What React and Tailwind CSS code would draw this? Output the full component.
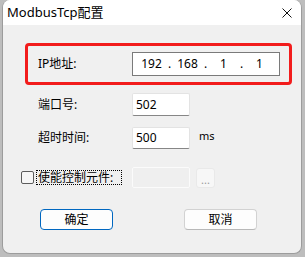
import React from 'react';

const font = { fontFamily: '"Noto Sans", "Noto Sans CJK SC", sans-serif' };

function Field({ className = '', children }) {
  return (
    <div className={`flex items-center bg-white border border-[#e3e3e3] border-b-[#868686] rounded-[2px] pl-[3px] text-[12px] text-black ${className}`}>
      {children}
    </div>
  );
}

export default function App() {
  const octets = ['192', '168', '1', '1'];
  return (
    <div className="w-[305px] h-[257px] bg-[#bdbdbd] overflow-hidden" style={font}>
      <div className="ml-[2px] w-[300px] h-[254px] bg-[#f0f0f0] border-x border-b border-[#9c9c9c] rounded-[8px] overflow-hidden flex flex-col">
        {/* Title bar */}
        <div className="h-[25px] bg-white flex items-center justify-between pl-[4px] pr-[9px]">
          <span className="text-[13px] text-black leading-none">ModbusTcp配置</span>
          <svg width="10" height="10" viewBox="0 0 10 10" className="mt-[1px]">
            <path d="M0.5 0.5 L9.5 9.5 M9.5 0.5 L0.5 9.5" stroke="#111" strokeWidth="1" fill="none" />
          </svg>
        </div>

        {/* IP row inside red frame */}
        <div className="mt-[18px] ml-[22px] w-[267px] h-[42px] border-[3px] border-[#f21c1c] rounded-[4px] flex items-center pl-[10px]">
          <span className="w-[94px] text-[12px] text-black">IP地址:</span>
          <div className="w-[148px] h-[24px] bg-white border border-[#7a7a7a] flex items-center pl-[4px] text-[12px] text-black">
            {octets.map((o, i) => (
              <React.Fragment key={i}>
                <span className="w-[29px] text-center">{o}</span>
                {i < 3 && <span className="w-[7px] text-center">.</span>}
              </React.Fragment>
            ))}
          </div>
        </div>

        {/* Port */}
        <div className="mt-[8px] ml-[35px] flex items-center">
          <span className="w-[94px] text-[12px] text-black">端口号:</span>
          <Field className="w-[58px] h-[23px]">502</Field>
        </div>

        {/* Timeout */}
        <div className="mt-[11px] ml-[35px] flex items-center">
          <span className="w-[94px] text-[12px] text-black">超时时间:</span>
          <Field className="w-[58px] h-[22px]">500</Field>
          <span className="ml-[9px] -mt-[3px] text-[11px] text-black">ms</span>
        </div>

        {/* Enable element */}
        <div className="mt-[18px] ml-[18px] flex items-center">
          <div className="w-[13px] h-[13px] border border-[#5c5c5c] rounded-[2px] bg-[#f6f6f6]" />
          <span className="ml-[2px] w-[86px] h-[15px] border border-dotted border-black flex items-center pl-[1px] text-[12px] text-black leading-[13px]">
            使能控制元件:
          </span>
          <div className="ml-[10px] w-[58px] h-[21px] bg-[#efefef] border border-[#fbfbfb] rounded-[2px]" />
          <div className="ml-[6px] w-[19px] h-[20px] bg-[#f7f7f7] border border-[#e9e9e9] rounded-[3px] flex items-center justify-center text-[11px] text-[#9a9a9a] leading-none pt-[4px]">
            ...
          </div>
        </div>

        {/* Buttons */}
        <div className="mt-[21px] flex items-center">
          <button className="ml-[37px] w-[73px] h-[21px] bg-[#fdfdfd] border border-[#0067c0] rounded-[4px] text-[12px] text-black leading-none flex items-center justify-center">
            确定
          </button>
          <button className="ml-[71px] w-[73px] h-[21px] bg-[#fdfdfd] border border-[#d2d2d2] border-b-[#b8b8b8] rounded-[4px] text-[12px] text-black leading-none flex items-center justify-center">
            取消
          </button>
        </div>
      </div>
    </div>
  );
}
